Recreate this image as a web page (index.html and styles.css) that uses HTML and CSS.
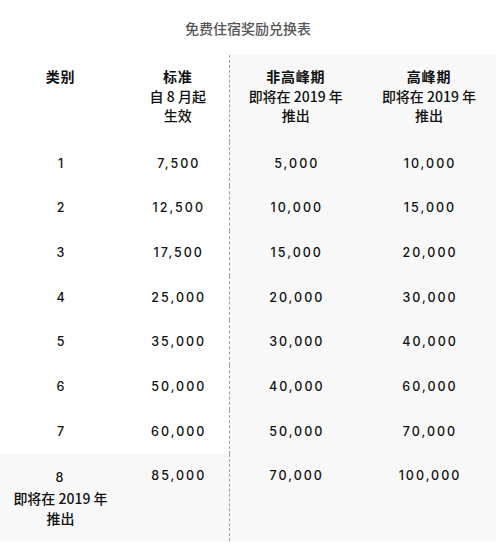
FILE: index.html
```html
<!DOCTYPE html>
<html lang="zh-CN">
<head>
<meta charset="utf-8">
<title>免费住宿奖励兑换表</title>
<link rel="stylesheet" href="styles.css">
</head>
<body>
<div class="page">
  <h1 class="title">免费住宿奖励兑换表</h1>
  <table class="chart">
    <colgroup>
      <col class="c-cat">
      <col class="c-std">
      <col class="c-off">
      <col class="c-peak">
    </colgroup>
    <thead>
      <tr>
        <th class="cat"><b>类别</b></th>
        <th class="std"><b>标准</b><br>自 8 月起<br>生效</th>
        <th class="off"><b>非高峰期</b><br>即将在 2019 年<br>推出</th>
        <th class="peak"><b>高峰期</b><br>即将在 2019 年<br>推出</th>
      </tr>
    </thead>
    <tbody>
      <tr><td class="cat num">1</td><td class="std num">7,500</td><td class="off num">5,000</td><td class="peak num">10,000</td></tr>
      <tr><td class="cat num">2</td><td class="std num">12,500</td><td class="off num">10,000</td><td class="peak num">15,000</td></tr>
      <tr><td class="cat num">3</td><td class="std num">17,500</td><td class="off num">15,000</td><td class="peak num">20,000</td></tr>
      <tr><td class="cat num">4</td><td class="std num">25,000</td><td class="off num">20,000</td><td class="peak num">30,000</td></tr>
      <tr><td class="cat num">5</td><td class="std num">35,000</td><td class="off num">30,000</td><td class="peak num">40,000</td></tr>
      <tr><td class="cat num">6</td><td class="std num">50,000</td><td class="off num">40,000</td><td class="peak num">60,000</td></tr>
      <tr><td class="cat num">7</td><td class="std num">60,000</td><td class="off num">50,000</td><td class="peak num">70,000</td></tr>
      <tr class="last"><td class="cat"><span class="num">8</span><br>即将在 2019 年<br>推出</td><td class="std num">85,000</td><td class="off num">70,000</td><td class="peak num">100,000</td></tr>
    </tbody>
  </table>
</div>
</body>
</html>
```

FILE: styles.css
```css
html, body {
  margin: 0;
  padding: 0;
  background: #ffffff;
}

body {
  font-family: "Noto Sans CJK SC", "Noto Sans", sans-serif;
  color: #111;
  font-size: 14px;
}

.page {
  width: 496px;
}

.title {
  margin: 0;
  padding-top: 18px;
  height: 55px;
  box-sizing: border-box;
  text-align: center;
  font-size: 14px;
  line-height: 20px;
  font-weight: 500;
  color: #555;
}

.chart {
  width: 496px;
  border-collapse: collapse;
  table-layout: fixed;
}

.c-cat { width: 121px; }
.c-std { width: 108px; }
.c-off { width: 133px; }
.c-peak { width: 134px; }

.chart th,
.chart td {
  text-align: center;
  vertical-align: top;
  padding: 12px 0 12.7px;
  line-height: 20px;
  font-size: 14px;
  font-weight: 500;
}

.chart th {
  padding-top: 12px;
  padding-bottom: 16px;
  line-height: 19.5px;
}

.chart th b {
  font-weight: 700;
  letter-spacing: 0.8px;
}

.chart .std {
  padding-left: 6px;
  border-right: 1px dashed #a0a0a0;
}

.chart .off,
.chart .peak {
  background: #f8f8f8;
}

.chart .last td {
  background: #f8f8f8;
  padding-bottom: 13px;
}

.chart .num {
  font-family: "Inter", "Lato", "Liberation Sans", sans-serif;
  font-size: 12.5px;
  letter-spacing: 2px;
  font-weight: 500;
  color: #111;
}

.chart td.num {
  text-indent: 2px;
}
```
